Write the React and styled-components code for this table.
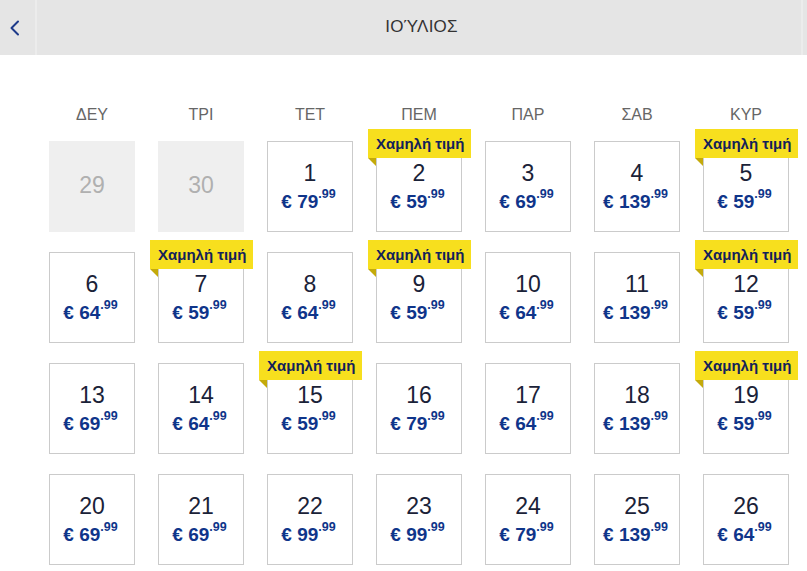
import React from "react";
import styled, { createGlobalStyle } from "styled-components";

const Global = createGlobalStyle`
  html, body { margin: 0; padding: 0; background: #fff; }
  body { font-family: "Liberation Sans", Arial, sans-serif; overflow: hidden; }
`;

const Page = styled.div`
  width: 807px;
  height: 571px;
  background: #fff;
`;

const Header = styled.div`
  display: flex;
  height: 55px;
  background: #e5e5e5;
`;

const NavButton = styled.button`
  box-sizing: border-box;
  width: ${(p) => p.$w}px;
  flex: none;
  border: none;
  padding: 0 0 0 ${(p) => (p.$side === "left" ? 9 : 0)}px;
  margin: 0;
  background: #e5e5e5;
  ${(p) => (p.$side === "left" ? "border-right: 2px solid #ececec;" : "border-left: 2px solid #ececec;")}
  display: flex;
  align-items: center;
  justify-content: flex-start;
  cursor: pointer;
`;

const Title = styled.div`
  flex: 1;
  display: flex;
  align-items: center;
  justify-content: center;
  font-size: 17px;
  color: #333;
  letter-spacing: 0.2px;
  padding: 0 0 2px 5px;
`;

const Calendar = styled.div`
  padding: 50px 0 0 49px;
`;

const Grid = styled.div`
  display: grid;
  grid-template-columns: repeat(7, 86px);
  column-gap: 23px;
  row-gap: 20px;
`;

const DayNames = styled.div`
  display: grid;
  grid-template-columns: repeat(7, 86px);
  column-gap: 23px;
  margin-bottom: 16px;
`;

const DayName = styled.div`
  text-align: center;
  font-size: 16px;
  line-height: 20px;
  color: #666;
`;

const Cell = styled.div`
  position: relative;
  box-sizing: border-box;
  height: 91px;
  display: flex;
  flex-direction: column;
  align-items: center;
  padding-top: 18px;
  background: ${(p) => (p.$muted ? "#efefef" : "#fff")};
  border: ${(p) => (p.$muted ? "none" : "1px solid #cbcbcb")};
`;

const Num = styled.div`
  font-size: 23px;
  line-height: 26px;
  color: ${(p) => (p.$muted ? "#b0b0b0" : "#1a2238")};
  ${(p) => p.$muted && "margin-top: 13px;"}
`;

const Price = styled.div`
  margin-top: 5px;
  margin-right: 3px;
  font-size: 19px;
  line-height: 22px;
  font-weight: bold;
  color: #0f358a;
  white-space: nowrap;
`;

const Cents = styled.sup`
  font-size: 12.5px;
  vertical-align: top;
  position: relative;
  top: -3px;
  line-height: 12px;
`;

const Badge = styled.div`
  position: absolute;
  top: -13px;
  left: -9px;
  height: 29px;
  padding: 0 7px 0 8px;
  background: #f7df1e;
  color: #13215a;
  font-size: 15px;
  font-weight: bold;
  line-height: 29px;
  white-space: nowrap;
  z-index: 2;
  &::after {
    content: "";
    position: absolute;
    left: 0;
    top: 29px;
    width: 0;
    height: 0;
    border-top: 8px solid #c4aa0a;
    border-left: 8px solid transparent;
  }
`;

const dayNames = ["ΔΕΥ", "ΤΡΙ", "ΤΕΤ", "ΠΕΜ", "ΠΑΡ", "ΣΑΒ", "ΚΥΡ"];

const days = [
  { d: 29, muted: true },
  { d: 30, muted: true },
  { d: 1, p: 79 },
  { d: 2, p: 59, low: true },
  { d: 3, p: 69 },
  { d: 4, p: 139 },
  { d: 5, p: 59, low: true },
  { d: 6, p: 64 },
  { d: 7, p: 59, low: true },
  { d: 8, p: 64 },
  { d: 9, p: 59, low: true },
  { d: 10, p: 64 },
  { d: 11, p: 139 },
  { d: 12, p: 59, low: true },
  { d: 13, p: 69 },
  { d: 14, p: 64 },
  { d: 15, p: 59, low: true },
  { d: 16, p: 79 },
  { d: 17, p: 64 },
  { d: 18, p: 139 },
  { d: 19, p: 59, low: true },
  { d: 20, p: 69 },
  { d: 21, p: 69 },
  { d: 22, p: 99 },
  { d: 23, p: 99 },
  { d: 24, p: 79 },
  { d: 25, p: 139 },
  { d: 26, p: 64 },
];

export default function App() {
  return (
    <Page>
      <Global />
      <Header>
        <NavButton $w={37} $side="left" aria-label="previous">
          <svg width="12" height="16" viewBox="0 0 12 16">
            <polyline
              points="9,1.5 2.5,8 9,14.5"
              fill="none"
              stroke="#1d3a8a"
              strokeWidth="2"
              strokeLinecap="round"
              strokeLinejoin="round"
            />
          </svg>
        </NavButton>
        <Title>ΙΟΎΛΙΟΣ</Title>
        <NavButton $w={6} $side="right" aria-label="next" />
      </Header>
      <Calendar>
        <DayNames>
          {dayNames.map((n) => (
            <DayName key={n}>{n}</DayName>
          ))}
        </DayNames>
        <Grid>
          {days.map((c) => (
            <Cell key={c.d} $muted={c.muted}>
              {c.low && <Badge>Χαμηλή τιμή</Badge>}
              <Num $muted={c.muted}>{c.d}</Num>
              {!c.muted && (
                <Price>
                  € {c.p}
                  <Cents>.99</Cents>
                </Price>
              )}
            </Cell>
          ))}
        </Grid>
      </Calendar>
    </Page>
  );
}
